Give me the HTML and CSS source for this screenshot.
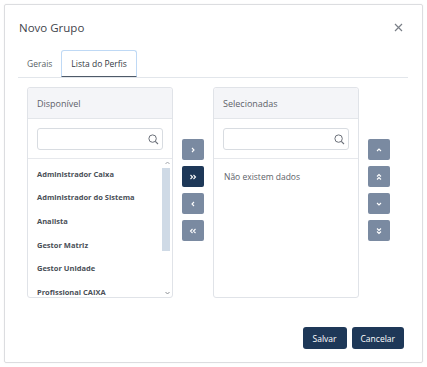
FILE: index.html
```html
<!DOCTYPE html>
<html lang="pt">
<head>
<meta charset="utf-8">
<link rel="stylesheet" href="styles.css">
</head>
<body>
<div class="dialog">
  <div class="header">
    <div class="title">Novo Grupo</div>
    <svg class="close" width="9" height="9" viewBox="0 0 9 9"><path d="M1 1L8 8M8 1L1 8" stroke="#7a7f87" stroke-width="1.2" fill="none"/></svg>
  </div>
  <div class="tabs">
    <div class="tab">Gerais</div>
    <div class="tab active">Lista do Perfis</div>
  </div>
  <div class="content">
    <div class="panel">
      <div class="panel-head">Disponível</div>
      <div class="search-wrap">
        <div class="search">
          <svg width="11" height="11" viewBox="0 0 11 11"><circle cx="4.6" cy="4.6" r="3.7" stroke="#6b7079" stroke-width="1" fill="none"/><path d="M7.3 7.3L10 10" stroke="#6b7079" stroke-width="1.1"/></svg>
        </div>
      </div>
      <div class="list">
        <div class="items">
          <div class="item">Administrador Caixa</div>
          <div class="item">Administrador do Sistema</div>
          <div class="item">Analista</div>
          <div class="item">Gestor Matriz</div>
          <div class="item">Gestor Unidade</div>
          <div class="item">Profissional CAIXA</div>
        </div>
        <div class="scrollbar">
          <svg class="sarrow" width="9" height="8" viewBox="0 0 9 8"><path d="M2.5 5L4.5 3L6.5 5" stroke="#a3a7ad" stroke-width="1" fill="none"/></svg>
          <div class="track"><div class="thumb"></div></div>
          <svg class="sarrow" width="9" height="8" viewBox="0 0 9 8"><path d="M2.5 3L4.5 5L6.5 3" stroke="#8d9196" stroke-width="1" fill="none"/></svg>
        </div>
      </div>
    </div>
    <div class="btns">
      <div class="btn"><svg width="8" height="8" viewBox="0 0 8 8"><path d="M3 2L5 4L3 6" stroke="#fff" stroke-width="1.1" fill="none"/></svg></div>
      <div class="btn dark"><svg width="8" height="8" viewBox="0 0 8 8"><path d="M1.5 2L3.5 4L1.5 6M4.5 2L6.5 4L4.5 6" stroke="#fff" stroke-width="1.1" fill="none"/></svg></div>
      <div class="btn"><svg width="8" height="8" viewBox="0 0 8 8"><path d="M5 2L3 4L5 6" stroke="#fff" stroke-width="1.1" fill="none"/></svg></div>
      <div class="btn"><svg width="8" height="8" viewBox="0 0 8 8"><path d="M3.5 2L1.5 4L3.5 6M6.5 2L4.5 4L6.5 6" stroke="#fff" stroke-width="1.1" fill="none"/></svg></div>
    </div>
    <div class="panel">
      <div class="panel-head">Selecionadas</div>
      <div class="search-wrap">
        <div class="search">
          <svg width="11" height="11" viewBox="0 0 11 11"><circle cx="4.6" cy="4.6" r="3.7" stroke="#6b7079" stroke-width="1" fill="none"/><path d="M7.3 7.3L10 10" stroke="#6b7079" stroke-width="1.1"/></svg>
        </div>
      </div>
      <div class="empty">Não existem dados</div>
    </div>
    <div class="btns">
      <div class="btn"><svg width="8" height="8" viewBox="0 0 8 8"><path d="M2 5L4 3L6 5" stroke="#fff" stroke-width="1.1" fill="none"/></svg></div>
      <div class="btn"><svg width="8" height="8" viewBox="0 0 8 8"><path d="M2 3.5L4 1.5L6 3.5M2 6.5L4 4.5L6 6.5" stroke="#fff" stroke-width="1.1" fill="none"/></svg></div>
      <div class="btn"><svg width="8" height="8" viewBox="0 0 8 8"><path d="M2 3L4 5L6 3" stroke="#fff" stroke-width="1.1" fill="none"/></svg></div>
      <div class="btn"><svg width="8" height="8" viewBox="0 0 8 8"><path d="M2 1.5L4 3.5L6 1.5M2 4.5L4 6.5L6 4.5" stroke="#fff" stroke-width="1.1" fill="none"/></svg></div>
    </div>
  </div>
  <div class="footer">
    <div class="fbtn">Salvar</div>
    <div class="fbtn">Cancelar</div>
  </div>
</div>
</body>
</html>
```
FILE: styles.css
```css
html, body {
  margin: 0;
  padding: 0;
  background: #ffffff;
}
body {
  font-family: "Open Sans", "Noto Sans", sans-serif;
  color: #4a4f57;
}
.dialog {
  margin: 4px;
  width: 417px;
  height: 357px;
  border: 1px solid #dcdde0;
  border-radius: 2px;
  box-shadow: 0 0 2px rgba(0,0,0,0.06);
  display: flex;
  flex-direction: column;
}
.header {
  height: 45px;
  display: flex;
  align-items: center;
  justify-content: space-between;
  padding: 0 19px 0 14px;
}
.title {
  font-size: 11.5px;
  color: #3f444b;
}
.close {
  display: block;
}
.tabs {
  display: flex;
  margin: 0 14px 0 13px;
  border-bottom: 1px solid #e2e6eb;
  height: 27px;
}
.tab {
  font-size: 8.5px;
  color: #5a5f66;
  padding: 0 9px 0 9px;
  display: flex;
  align-items: center;
  height: 27px;
  box-sizing: border-box;
}
.tab.active {
  color: #33383f;
  padding: 0 9px;
  border: 1px solid #bfd9f5;
  border-bottom: 1.5px solid #4e5a68;
  border-radius: 3px 3px 0 0;
}
.content {
  flex: 1;
  display: flex;
  align-items: flex-start;
  padding: 9px 0 0 22px;
  gap: 9px;
}
.panel {
  width: 144px;
  height: 209px;
  border: 1px solid #e0e3e8;
  border-radius: 3px;
  display: flex;
  flex-direction: column;
}
.panel-head {
  height: 30px;
  background: #f4f5f8;
  border-bottom: 1px solid #e3e6ea;
  font-size: 9px;
  color: #5d6269;
  display: flex;
  align-items: center;
  padding-left: 9px;
  border-radius: 3px 3px 0 0;
}
.search-wrap {
  padding: 9px 9px 8px 9px;
  border-bottom: 1px solid #e6e8ec;
}
.search {
  height: 20px;
  border: 1px solid #d8dce1;
  border-radius: 3px;
  display: flex;
  align-items: center;
  justify-content: flex-end;
  padding-right: 3px;
}
.search svg {
  display: block;
}
.list {
  flex: 1;
  display: flex;
  min-height: 0;
  overflow: hidden;
}
.items {
  flex: 1;
  display: flex;
  flex-direction: column;
  padding: 3px 0 0 9px;
}
.item {
  flex: none;
  height: 23.6px;
  display: flex;
  align-items: center;
  font-size: 7.5px;
  font-weight: 700;
  color: #4a4f57;
  white-space: nowrap;
}
.scrollbar {
  width: 10px;
  display: flex;
  flex-direction: column;
  align-items: center;
}
.sarrow {
  display: block;
  flex: none;
}
.track {
  flex: 1;
  width: 10px;
  display: flex;
  flex-direction: column;
}
.thumb {
  margin-top: 1px;
  height: 83px;
  width: 8px;
  background: #cfdae6;
}
.empty {
  font-size: 8.5px;
  color: #5d6269;
  padding: 12px 0 0 10px;
}
.btns {
  display: flex;
  flex-direction: column;
  gap: 6px;
  padding-top: 52px;
}
.btn {
  width: 22px;
  height: 21px;
  background: #7a8aa1;
  border-radius: 2px;
  display: flex;
  align-items: center;
  justify-content: center;
}
.btn svg {
  display: block;
}
.btn.dark {
  background: #1e3858;
}
.footer {
  display: flex;
  justify-content: flex-end;
  gap: 5px;
  padding: 0 18px 13px 0;
}
.fbtn {
  height: 22px;
  padding: 0 9px;
  background: #1e3858;
  color: #ffffff;
  font-size: 8.5px;
  border-radius: 3px;
  display: flex;
  align-items: center;
}
.fbtn:first-child {
  padding: 0 10px;
}
```
